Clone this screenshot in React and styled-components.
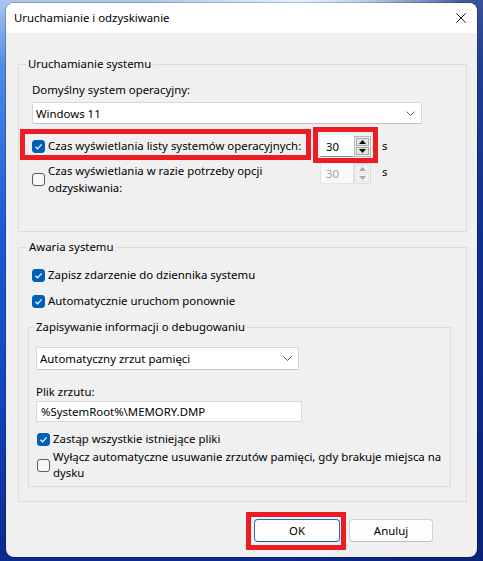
import React from 'react';
import styled, { createGlobalStyle } from 'styled-components';

const GlobalStyle = createGlobalStyle`
  html, body {
    margin: 0;
    padding: 0;
  }
  body {
    width: 483px;
    height: 561px;
    overflow: hidden;
    font-family: "Segoe UI", "Noto Sans", sans-serif;
    font-size: 11.4px;
    color: #000;
    background:
      radial-gradient(ellipse 160px 40px at 300px 0px, rgba(235, 245, 255, 0.9), rgba(235, 245, 255, 0) 100%),
      linear-gradient(to right, rgba(10, 30, 110, 0) 60%, rgba(10, 30, 110, 0.7) 100%),
      linear-gradient(to bottom, #a8c6ee 0%, #4f8ae6 12%, #1c5ad8 40%, #1344c0 70%, #0a2a8c 100%);
  }
`;

const Desktop = styled.div`
  box-sizing: border-box;
  height: 561px;
  padding: 3px 6px 0 6px;
`;

const Window = styled.div`
  box-sizing: border-box;
  width: 471px;
  height: 554px;
  display: flex;
  flex-direction: column;
  background: #f0f0f0;
  border-radius: 8px;
  overflow: hidden;
  box-shadow: 0 0 0 1px rgba(0, 0, 0, 0.2);
`;

const TitleBar = styled.div`
  height: 30px;
  flex-shrink: 0;
  display: flex;
  align-items: center;
  justify-content: space-between;
  padding: 0 11px 0 8px;
  background: #fff;
`;

const Title = styled.span`
  line-height: 16px;
`;

const CloseGlyph = styled.svg`
  width: 10px;
  height: 10px;
  display: block;
`;

const Body = styled.div`
  flex: 1;
  display: flex;
  flex-direction: column;
  padding: 23px 10px 0 12px;
`;

const GroupBox = styled.fieldset`
  margin: ${p => p.$margin || '0'};
  padding: ${p => p.$pad};
  border: 1px solid #dcdcdc;
  min-width: 0;
  display: flex;
  flex-direction: column;
`;

const Legend = styled.legend`
  padding: 0 2px;
  margin-left: ${p => p.$offset}px;
  line-height: 16px;
`;

const FieldLabel = styled.div`
  line-height: 16px;
  margin-top: ${p => p.$mt || 0}px;
`;

const ComboBox = styled.div`
  box-sizing: border-box;
  width: ${p => p.$width}px;
  height: ${p => p.$height}px;
  margin-top: ${p => p.$mt || 0}px;
  display: flex;
  align-items: center;
  justify-content: space-between;
  padding: 0 6px 0 3px;
  background: #fff;
  border: 1px solid #d6d6d6;
  border-bottom-color: #c4c4c4;
  border-radius: 2px;
`;

const TextBox = styled.div`
  box-sizing: border-box;
  width: ${p => p.$width}px;
  height: 21px;
  margin-top: ${p => p.$mt || 0}px;
  display: flex;
  align-items: center;
  padding: 0 4px;
  background: #fff;
  border: 1px solid #dadada;
`;

const Chevron = () => (
  <svg width="9" height="5" viewBox="0 0 9 5">
    <path d="M0.5 0.5 L4.5 4.5 L8.5 0.5" fill="none" stroke="#5a5a5a" strokeWidth="1" />
  </svg>
);

const TimeoutRow = styled.div`
  display: flex;
  align-items: ${p => (p.$top ? 'flex-start' : 'center')};
  margin-top: ${p => p.$mt || 0}px;
`;

const OptionSlot = styled.div`
  width: 288px;
  display: flex;
  align-items: center;
`;

const CheckRow = styled.div`
  display: flex;
  align-items: ${p => (p.$center ? 'center' : 'flex-start')};
  gap: 3px;
  line-height: ${p => p.$lh || 16}px;
  margin-top: ${p => p.$mt || 0}px;
  margin-left: ${p => p.$ml || 0}px;
  white-space: nowrap;
`;

const Box = styled.span`
  box-sizing: border-box;
  flex-shrink: 0;
  width: 13px;
  height: 13px;
  margin-top: ${p => (p.$center ? 0 : 2)}px;
  border-radius: 3px;
  display: flex;
  align-items: center;
  justify-content: center;
  background: ${p => (p.$checked ? '#005fb8' : '#f7f7f7')};
  border: 1px solid ${p => (p.$checked ? '#005fb8' : '#5c5c5c')};
`;

const Checkbox = ({ checked, center }) => (
  <Box $checked={checked} $center={center}>
    {checked && (
      <svg width="9" height="9" viewBox="0 0 9 9">
        <path d="M1.5 4.8 L3.6 6.8 L7.6 2.3" fill="none" stroke="#fff" strokeWidth="1.2" />
      </svg>
    )}
  </Box>
);

const Spinner = styled.div`
  display: flex;
  align-items: center;
  width: 51px;
  height: 22px;
`;

const SpinEdit = styled.div`
  box-sizing: border-box;
  width: 34px;
  height: 22px;
  display: flex;
  align-items: center;
  padding-left: 5px;
  background: ${p => (p.$disabled ? '#f9f9f9' : '#fff')};
  color: ${p => (p.$disabled ? '#a0a0a0' : '#000')};
  border: 1px solid ${p => (p.$disabled ? '#e4e4e4' : '#fff')};
  border-bottom-color: ${p => (p.$disabled ? '#e4e4e4' : '#8a8a8a')};
`;

const SpinButtons = styled.div`
  box-sizing: border-box;
  width: 17px;
  height: 21px;
  display: flex;
  flex-direction: column;
  gap: 1px;
  padding: 1px;
  background: ${p => (p.$disabled ? '#f4f4f4' : '#f0f0f0')};
  border: 1px solid ${p => (p.$disabled ? '#dcdcdc' : '#b8b8b8')};
`;

const SpinButton = styled.span`
  box-sizing: border-box;
  flex: 1;
  display: flex;
  align-items: center;
  justify-content: center;
  background: ${p => (p.$disabled ? '#f4f4f4' : '#e3e3e3')};
  border: 1px solid ${p => (p.$disabled ? '#e6e6e6' : '#a8a8a8')};
`;

const Arrow = ({ down, disabled }) => (
  <svg width="7" height="4" viewBox="0 0 7 4">
    <path
      d={down ? 'M0 0 L7 0 L3.5 4 Z' : 'M0 4 L7 4 L3.5 0 Z'}
      fill={disabled ? '#a8a8a8' : '#000'}
    />
  </svg>
);

const SpinBox = ({ value, disabled }) => (
  <Spinner>
    <SpinEdit $disabled={disabled}>{value}</SpinEdit>
    <SpinButtons $disabled={disabled}>
      <SpinButton $disabled={disabled}><Arrow disabled={disabled} /></SpinButton>
      <SpinButton $disabled={disabled}><Arrow down disabled={disabled} /></SpinButton>
    </SpinButtons>
  </Spinner>
);

const Unit = styled.span`
  margin-left: 11px;
  line-height: 16px;
  margin-top: ${p => p.$mt || 0}px;
`;

const Marked = styled.div`
  position: relative;
  display: inline-flex;
`;

const RedFrame = styled.span`
  position: absolute;
  top: ${p => p.$t}px;
  left: ${p => p.$l}px;
  right: ${p => p.$r}px;
  bottom: ${p => p.$b}px;
  border: 5px solid #ed1c24;
  pointer-events: none;
`;

const ButtonRow = styled.div`
  display: flex;
  justify-content: flex-end;
  gap: 9px;
  margin-top: 17px;
  padding-right: 34px;
`;

const DialogButton = styled.button`
  box-sizing: border-box;
  width: ${p => p.$width}px;
  height: 23px;
  padding: 0;
  font-family: inherit;
  font-size: 11.4px;
  color: #000;
  background: #fdfdfd;
  border: 1px solid ${p => (p.$primary ? '#1a6fc4' : '#d0d0d0')};
  border-bottom-color: ${p => (p.$primary ? '#0f5aa8' : '#bdbdbd')};
  border-radius: 4px;
`;

export default function App() {
  return (
    <>
      <GlobalStyle />
      <Desktop>
        <Window>
          <TitleBar>
            <Title>Uruchamianie i odzyskiwanie</Title>
            <CloseGlyph viewBox="0 0 10 10">
              <path d="M0.3 0.3 L9.7 9.7 M9.7 0.3 L0.3 9.7" stroke="#1a1a1a" strokeWidth="1" />
            </CloseGlyph>
          </TitleBar>
          <Body>
            <GroupBox $pad="10px 13px 35px 13px">
              <Legend $offset={-6}>Uruchamianie systemu</Legend>
              <FieldLabel>Domyślny system operacyjny:</FieldLabel>
              <ComboBox $width={390} $height={22} $mt={4}>
                <span>Windows 11</span>
                <Chevron />
              </ComboBox>
              <TimeoutRow $mt={11}>
                <OptionSlot>
                  <Marked>
                    <CheckRow>
                      <Checkbox checked />
                      <span>Czas wyświetlania listy systemów operacyjnych:</span>
                    </CheckRow>
                    <RedFrame $t={-9} $l={-12} $r={-10} $b={-6} />
                  </Marked>
                </OptionSlot>
                <Marked>
                  <SpinBox value="30" />
                  <RedFrame $t={-8} $l={-7} $r={-7} $b={-6} />
                </Marked>
                <Unit>s</Unit>
              </TimeoutRow>
              <TimeoutRow $top $mt={5}>
                <OptionSlot>
                  <CheckRow $lh={17} $center>
                    <Checkbox center />
                    <span>Czas wyświetlania w razie potrzeby opcji<br />odzyskiwania:</span>
                  </CheckRow>
                </OptionSlot>
                <SpinBox value="30" disabled />
                <Unit $mt={2}>s</Unit>
              </TimeoutRow>
            </GroupBox>

            <GroupBox $margin="7px 0 0 0" $pad="12px 15px 14px 13px">
              <Legend $offset={-5}>Awaria systemu</Legend>
              <CheckRow>
                <Checkbox checked />
                <span>Zapisz zdarzenie do dziennika systemu</span>
              </CheckRow>
              <CheckRow $mt={10}>
                <Checkbox checked />
                <span>Automatycznie uruchom ponownie</span>
              </CheckRow>
              <GroupBox $margin="10px 0 0 -4px" $pad="12px 8px 5px 7px">
                <Legend $offset={-2}>Zapisywanie informacji o debugowaniu</Legend>
                <ComboBox $width={263} $height={23}>
                  <span>Automatyczny zrzut pamięci</span>
                  <Chevron />
                </ComboBox>
                <FieldLabel $mt={14}>Plik zrzutu:</FieldLabel>
                <TextBox $width={266} $mt={1}>%SystemRoot%\MEMORY.DMP</TextBox>
                <CheckRow $mt={9} $ml={1}>
                  <Checkbox checked />
                  <span>Zastąp wszystkie istniejące pliki</span>
                </CheckRow>
                <CheckRow $mt={2} $ml={1} $center>
                  <Checkbox center />
                  <span>Wyłącz automatyczne usuwanie zrzutów pamięci, gdy brakuje miejsca na<br />dysku</span>
                </CheckRow>
              </GroupBox>
            </GroupBox>

            <ButtonRow>
              <Marked>
                <DialogButton $primary $width={86}>OK</DialogButton>
                <RedFrame $t={-7} $l={-8} $r={-6} $b={-8} />
              </Marked>
              <DialogButton $width={84}>Anuluj</DialogButton>
            </ButtonRow>
          </Body>
        </Window>
      </Desktop>
    </>
  );
}
